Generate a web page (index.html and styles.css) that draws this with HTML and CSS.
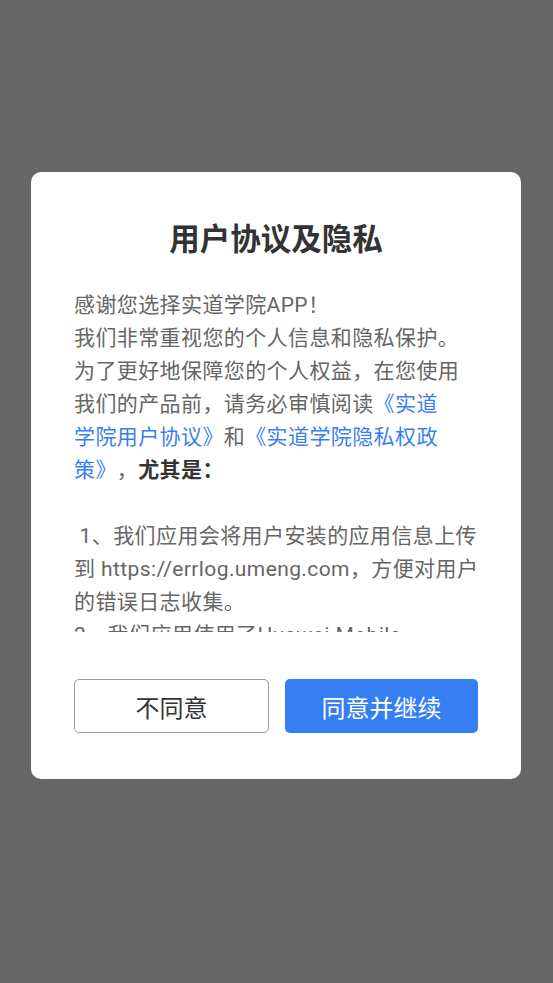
FILE: index.html
```html
<!DOCTYPE html>
<html lang="zh-CN">
<head>
  <meta charset="UTF-8">
  <meta name="viewport" content="width=device-width, initial-scale=1.0">
  <title>用户协议及隐私</title>
  <link rel="stylesheet" href="styles.css">
</head>
<body>
  <div class="overlay">
    <div class="dialog">
      <h2 class="dialog-title">用户协议及隐私</h2>

      <div class="dialog-content">
        <p>感谢您选择实道学院APP！<br>
          我们非常重视您的个人信息和隐私保护。<br>
          为了更好地保障您的个人权益，在您使用<br>
          我们的产品前，请务必审慎阅读<a href="#" class="link">《实道<br>学院用户协议》</a>和<a href="#" class="link">《实道学院隐私权政<br>策》</a>，<strong>尤其是：</strong></p>
        <p>&nbsp;1、我们应用会将用户安装的应用信息上传<br>
          到 https://errlog.umeng.com，方便对用户<br>
          的错误日志收集。<br>
          2、我们应用使用了Huawei Mobile<br>
          Services SDK，用于消息推送服务。</p>
      </div>

      <div class="dialog-actions">
        <button class="btn btn-cancel">不同意</button>
        <button class="btn btn-ok">同意并继续</button>
      </div>
    </div>
  </div>
</body>
</html>
```

FILE: styles.css
```css
/* Styles généraux */
body {
  margin: 0;
  padding: 0;
  background-color: #666666;
  font-family: Roboto, "Noto Sans CJK SC", sans-serif;
}

.overlay {
  height: 983px;
  padding: 172px 0 0 31px;
  box-sizing: border-box;
}

.dialog {
  width: 490px;
  height: 607px;
  box-sizing: border-box;
  background-color: #fff;
  border-radius: 10px;
  padding: 48px 43px 0 43px;
}

.dialog-title {
  margin: 0;
  text-align: center;
  font-size: 30.5px;
  line-height: 40px;
  font-weight: bold;
  color: #333;
}

.dialog-content {
  margin-top: 29px;
  height: 343px;
  overflow: hidden;
  white-space: nowrap;
  font-size: 21px;
  letter-spacing: 0.4px;
  line-height: 33px;
  color: #666;
  text-spacing-trim: space-all;
}

.dialog-content p {
  margin: 0 0 33px 0;
}

.link {
  color: #3a7ff0;
  text-decoration: none;
}

.dialog-content strong {
  color: #333;
}

.dialog-actions {
  display: flex;
  gap: 16px;
  margin-top: 47px;
}

.btn {
  flex: 1;
  height: 54px;
  font-family: Roboto, "Noto Sans CJK SC", sans-serif;
  font-size: 24px;
  border-radius: 5px;
  cursor: pointer;
}

.btn-cancel {
  background-color: #fff;
  border: 1px solid #999;
  color: #333;
}

.btn-ok {
  background-color: #367ff2;
  border: none;
  color: #fff;
}
```
